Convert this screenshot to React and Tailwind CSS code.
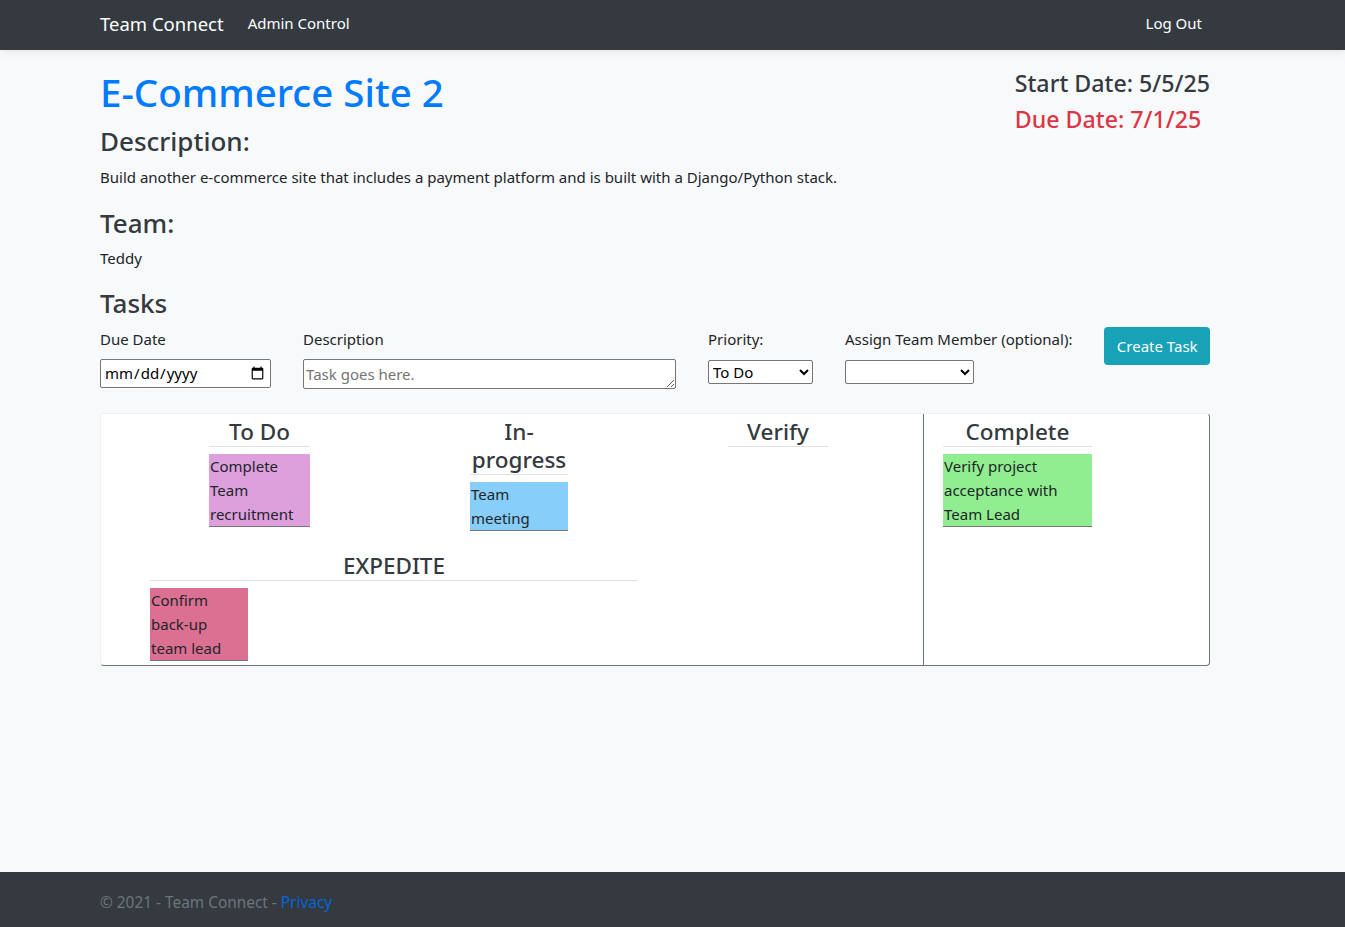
import {useState} from "react";

const columns = [
    {title: "To Do", width: "w-[101px]", tasks: [{text: "Complete Team recruitment", color: "bg-[#dda0dd]"}]},
    {title: "In-progress", width: "w-[98px]", tasks: [{text: "Team meeting", color: "bg-[#87cefa]"}]},
    {title: "Verify", width: "w-[100px]", tasks: []},
];

function TaskCard({text, color}) {
    return (
        <div className={`mt-[7px] ${color} pr-1 pl-[1px] text-[15px] leading-[24px] text-[#212529] border-b border-[#777]`}>
            {text}
        </div>
    );
}

function ColumnHead({title}) {
    return (
        <h4 className="text-center text-[22.5px] leading-[28px] text-[#343a40] font-medium border-b border-[#dee2e6]">
            {title}
        </h4>
    );
}

function App() {

    // -- Form state ---------------------------------------------------------------------------
    const [priority, setPriority] = useState("todo");
    const [member, setMember] = useState("");

    return (
        <div className="min-h-[927px] flex flex-col bg-[#f8f9fa] font-['Noto_Sans','Liberation_Sans',sans-serif] text-[#212529]">
            {/* navbar */}
            <nav className="h-[50px] bg-[#343a40] shadow-[0_2px_8px_rgba(0,0,0,0.08)]">
                <div className="ml-[100px] w-[1110px] h-full flex items-center">
                    <span className="text-[18.5px] text-white -mt-[2px]">Team Connect</span>
                    <a className="ml-[24px] text-[15px] text-white -mt-[4px]">Admin Control</a>
                    <a className="ml-auto mr-[8px] text-[15px] text-white -mt-[4px]">Log Out</a>
                </div>
            </nav>

            {/* main */}
            <main className="flex-1">
                <div className="ml-[100px] w-[1110px] pt-[18px]">
                    <div className="flex justify-between items-start">
                        <div>
                            <h1 className="text-[38.5px] leading-[48px] text-[#007bff] font-medium">E-Commerce Site 2</h1>
                            <h3 className="mt-[8px] text-[26px] leading-[34px] text-[#343a40] font-medium">Description:</h3>
                            <p className="mt-[7px] text-[15px] leading-[24px]">
                                Build another e-commerce site that includes a payment platform and is built with a Django/Python stack.
                            </p>
                            <h3 className="mt-[17px] text-[26px] leading-[34px] text-[#343a40] font-medium">Team:</h3>
                            <p className="mt-[6px] text-[15px] leading-[24px]">Teddy</p>
                            <h3 className="mt-[16px] text-[26px] leading-[34px] text-[#343a40] font-medium">Tasks</h3>
                        </div>
                        <div className="pt-[1px]">
                            <h4 className="text-[23.2px] leading-[29px] text-[#343a40] font-medium">Start Date: 5/5/25</h4>
                            <h4 className="mt-[7px] text-[23.2px] leading-[29px] text-[#dc3545] font-medium">Due Date: 7/1/25</h4>
                        </div>
                    </div>

                    {/* task form */}
                    <div className="mt-[7px] flex items-start gap-8 text-[15px]">
                        <div className="w-[171px]">
                            <label className="block leading-[24px]">Due Date</label>
                            <input type="date" className="mt-[8px] w-[171px] h-[29px] px-[3px] bg-white border border-[#767676] rounded-[2px] text-black"/>
                        </div>
                        <div className="w-[373px]">
                            <label className="block leading-[24px]">Description</label>
                            <textarea rows={1} placeholder="Task goes here." className="mt-[8px] block w-[373px] h-[30px] px-[2px] pt-[3px] pb-[1px] leading-[22px] bg-white border border-[#767676] rounded-[2px] placeholder:text-[#757575]"/>
                        </div>
                        <div className="w-[105px]">
                            <label className="block leading-[24px]">Priority:</label>
                            <select value={priority} onChange={e => setPriority(e.target.value)} className="mt-[9px] w-[105px] h-[24px] bg-white border border-[#767676] rounded-[2px] text-black">
                                <option value="todo">To Do</option>
                                <option value="progress">In-progress</option>
                                <option value="verify">Verify</option>
                                <option value="complete">Complete</option>
                                <option value="expedite">EXPEDITE</option>
                            </select>
                        </div>
                        <div className="w-[228px]">
                            <label className="block leading-[24px] whitespace-nowrap">Assign Team Member (optional):</label>
                            <select value={member} onChange={e => setMember(e.target.value)} className="mt-[9px] w-[129px] h-[24px] bg-white border border-[#767676] rounded-[2px] text-black">
                                <option value=""></option>
                                <option value="teddy">Teddy</option>
                            </select>
                        </div>
                        <button className="ml-auto w-[106px] h-[38px] bg-[#17a2b8] text-white rounded-[4px]">Create Task</button>
                    </div>

                    {/* board */}
                    <div className="mt-6 flex bg-white rounded-[4px] border border-[#f0f0f0] border-r-[#6c757d] border-b-[#6c757d]">
                        <div className="w-[823px] border-r border-[#6c757d] pt-[4px] pb-[4px]">
                            <div className="flex items-start pl-[108px] gap-[160px]">
                                {columns.map(col => (
                                    <div key={col.title} className={col.width}>
                                        <ColumnHead title={col.title}/>
                                        {col.tasks.map(t => <TaskCard key={t.text} {...t}/>)}
                                    </div>
                                ))}
                            </div>
                            <div className="ml-[49px] mt-[21px] w-[488px]">
                                <ColumnHead title="EXPEDITE"/>
                                <div className="w-[98px]">
                                    <TaskCard text="Confirm back-up team lead" color="bg-[#db7093]"/>
                                </div>
                            </div>
                        </div>
                        <div className="flex-1 pt-[4px] pl-[19px]">
                            <div className="w-[149px]">
                                <ColumnHead title="Complete"/>
                                <TaskCard text="Verify project acceptance with Team Lead" color="bg-[#90ee90]"/>
                            </div>
                        </div>
                    </div>
                </div>
            </main>

            {/* footer */}
            <footer className="h-[55px] bg-[#343a40] pt-[19px]">
                <div className="ml-[100px] text-[15.4px] leading-[24px] text-[#6c757d]">
                    © 2021 - Team Connect - <a className="text-[#0366d6]">Privacy</a>
                </div>
            </footer>
        </div>
    );
}

export default App;
